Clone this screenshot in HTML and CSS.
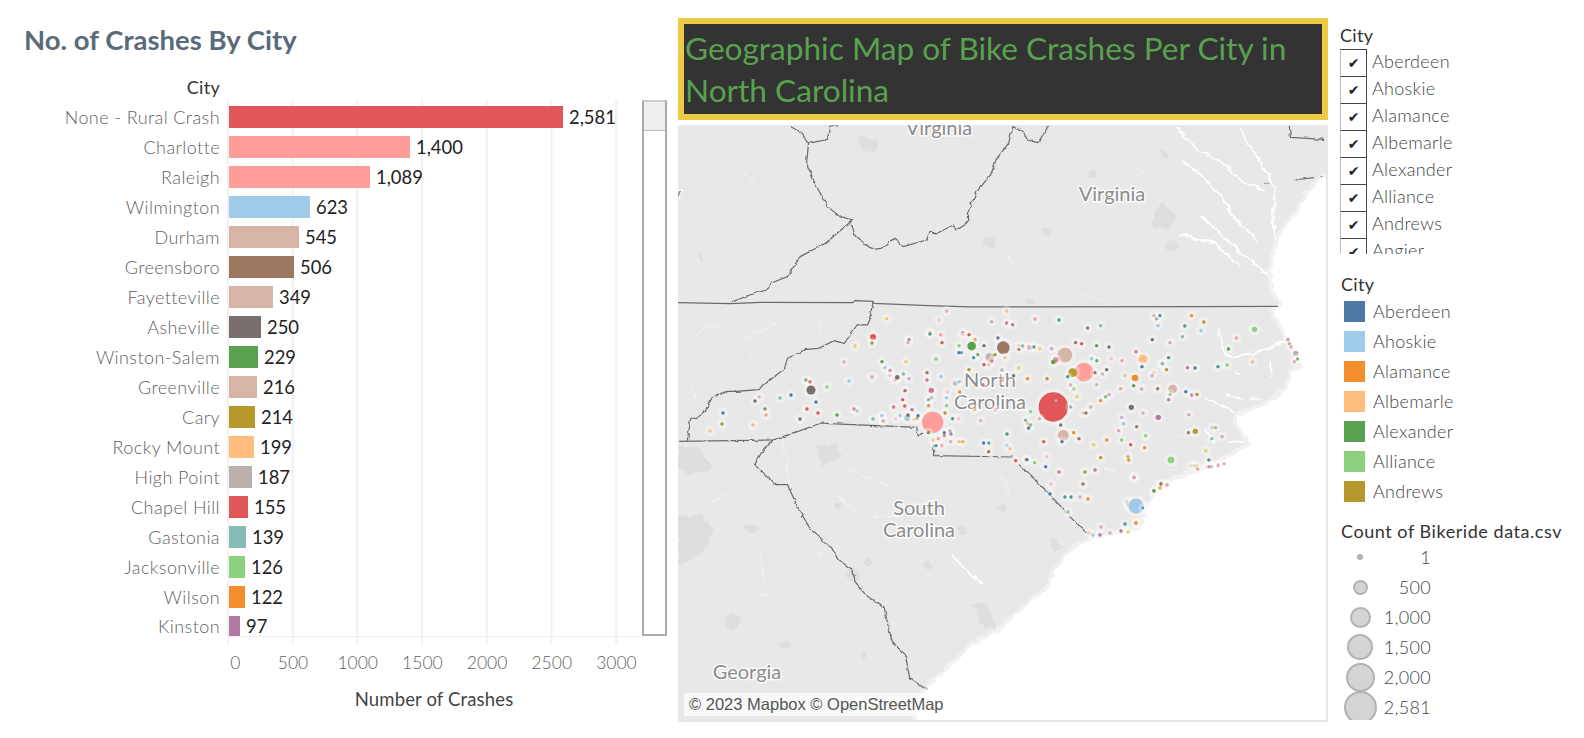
FILE: index.html
```html
<!DOCTYPE html>
<html lang="en">
<head>
<meta charset="utf-8">
<title>Bike Crashes in North Carolina</title>
<link rel="stylesheet" href="styles.css">
</head>
<body>
<main class="dash">
  <section class="left">
    <h1 class="chart-title">No. of Crashes By City</h1>
    <div class="city-head">City</div>
    <div class="chart">
      <div class="grid"></div>
      <div class="rows">
        <div class="row"><span class="lbl">None - Rural Crash</span><span class="bar red" style="width:334px"></span><span class="val">2,581</span></div>
        <div class="row"><span class="lbl">Charlotte</span><span class="bar pk" style="width:181px"></span><span class="val">1,400</span></div>
        <div class="row"><span class="lbl">Raleigh</span><span class="bar pk" style="width:141px"></span><span class="val">1,089</span></div>
        <div class="row"><span class="lbl">Wilmington</span><span class="bar lb" style="width:81px"></span><span class="val">623</span></div>
        <div class="row"><span class="lbl">Durham</span><span class="bar tn" style="width:70px"></span><span class="val">545</span></div>
        <div class="row"><span class="lbl">Greensboro</span><span class="bar br" style="width:65px"></span><span class="val">506</span></div>
        <div class="row"><span class="lbl">Fayetteville</span><span class="bar tn" style="width:44px"></span><span class="val">349</span></div>
        <div class="row"><span class="lbl">Asheville</span><span class="bar gr" style="width:32px"></span><span class="val">250</span></div>
        <div class="row"><span class="lbl">Winston-Salem</span><span class="bar g" style="width:29px"></span><span class="val">229</span></div>
        <div class="row"><span class="lbl">Greenville</span><span class="bar tn" style="width:28px"></span><span class="val">216</span></div>
        <div class="row"><span class="lbl">Cary</span><span class="bar y" style="width:26px"></span><span class="val">214</span></div>
        <div class="row"><span class="lbl">Rocky Mount</span><span class="bar lo" style="width:25px"></span><span class="val">199</span></div>
        <div class="row"><span class="lbl">High Point</span><span class="bar ls" style="width:23px"></span><span class="val">187</span></div>
        <div class="row"><span class="lbl">Chapel Hill</span><span class="bar red" style="width:19px"></span><span class="val">155</span></div>
        <div class="row"><span class="lbl">Gastonia</span><span class="bar lt" style="width:17px"></span><span class="val">139</span></div>
        <div class="row"><span class="lbl">Jacksonville</span><span class="bar lg" style="width:16px"></span><span class="val">126</span></div>
        <div class="row"><span class="lbl">Wilson</span><span class="bar o" style="width:16px"></span><span class="val">122</span></div>
        <div class="row last"><span class="lbl">Kinston</span><span class="bar pu" style="width:11px"></span><span class="val">97</span></div>
      </div>
      <div class="scroll"><div class="thumb"></div></div>
    </div>
    <div class="ticks"></div>
    <div class="axis">
      <span class="zero">0</span><span>500</span><span>1000</span><span>1500</span><span>2000</span><span>2500</span><span>3000</span>
    </div>
    <div class="axis-title">Number of Crashes</div>
  </section>

  <section class="center">
    <h2 class="map-title">Geographic Map of Bike Crashes Per City in North Carolina</h2>
    <div class="map">
      <svg class="map-svg" viewBox="678 125 648 595" width="648" height="595" aria-label="Map of bike crashes">
        <defs>
          <filter id="rough" x="-5%" y="-5%" width="110%" height="110%">
            <feTurbulence type="fractalNoise" baseFrequency="0.035" numOctaves="3" seed="4"/>
            <feDisplacementMap in="SourceGraphic" scale="22" xChannelSelector="R" yChannelSelector="G"/>
            <feGaussianBlur stdDeviation="1"/>
          </filter>
          <filter id="wiggle" x="-5%" y="-5%" width="110%" height="110%">
            <feTurbulence type="fractalNoise" baseFrequency="0.07" numOctaves="2" seed="9"/>
            <feDisplacementMap in="SourceGraphic" scale="9" xChannelSelector="R" yChannelSelector="G"/>
          </filter>
          <filter id="coast" x="-5%" y="-5%" width="110%" height="110%">
            <feTurbulence type="fractalNoise" baseFrequency="0.05" numOctaves="3" seed="2"/>
            <feDisplacementMap in="SourceGraphic" scale="16" xChannelSelector="R" yChannelSelector="G"/>
          </filter>
        </defs>
        <rect x="678" y="125" width="648" height="595" class="land"/>
        <g transform="translate(676,0) scale(.4209,.3333)">
          <g class="blob" filter="url(#rough)">
            <path d="M1130,640 L1160,610 L1190,650 L1170,690 L1135,680Z"/>
            <path d="M730,710 L760,715 L755,745 L730,740Z"/>
            <path d="M430,410 L480,430 L470,460 L440,450Z"/>
            <ellipse cx="880" cy="695" rx="10" ry="14"/>
            <ellipse cx="1158" cy="460" rx="9" ry="16"/>
            <ellipse cx="992" cy="520" rx="8" ry="14"/>
            <ellipse cx="1180" cy="735" rx="14" ry="16"/>
            <ellipse cx="60" cy="770" rx="6" ry="14"/>
            <ellipse cx="843" cy="905" rx="10" ry="10"/>
          </g>
          <g class="river" filter="url(#rough)">
            <path class="fat" d="M1190,385 L1240,450 L1290,480 L1340,540 L1400,570"/>
            <path class="fat" d="M1200,480 L1270,550 L1320,640 L1380,720"/>
            <path class="fat" d="M1250,650 L1310,720 L1370,790 L1420,835"/>
            <path class="fat" d="M1195,705 L1280,730 L1340,800"/>
            <path class="fat" d="M1340,385 L1380,470 L1420,560 L1425,760"/>
            <path d="M775,745 L800,790"/>
            <path d="M1090,495 L1115,530"/>
            <path d="M950,880 L1010,900 L1050,925"/>
            <path d="M155,510 L180,545"/>
            <path d="M50,1000 L110,965"/>
            <path d="M165,1020 L240,965"/>
            <path d="M345,960 L340,985"/>
            <path d="M170,1070 L210,1035"/>
          </g>
        </g>
        <g transform="translate(676,368) scale(.4209,.3333)">
          <g class="blob" filter="url(#rough)">
            <path d="M5,440 L60,440 L90,480 L60,560 L5,590Z"/>
            <path d="M5,235 L60,250 L90,300 L30,320 L5,300Z"/>
            <path d="M330,235 L380,225 L395,270 L350,290Z"/>
            <path d="M705,705 L740,710 L760,780 L730,780Z"/>
            <path d="M890,510 L920,530 L900,560Z"/>
            <ellipse cx="135" cy="760" rx="18" ry="22"/>
            <ellipse cx="180" cy="480" rx="16" ry="12"/>
            <ellipse cx="385" cy="415" rx="9" ry="12"/>
            <ellipse cx="778" cy="420" rx="10" ry="12"/>
            <ellipse cx="600" cy="592" rx="8" ry="12"/>
            <ellipse cx="457" cy="580" rx="8" ry="14"/>
            <ellipse cx="680" cy="488" rx="10" ry="14"/>
            <ellipse cx="258" cy="832" rx="9" ry="9"/>
            <ellipse cx="445" cy="860" rx="6" ry="12"/>
            <ellipse cx="420" cy="620" rx="18" ry="20"/>
          </g>
          <g class="river" filter="url(#rough)">
            <path d="M70,420 L125,370"/>
            <path d="M255,220 L270,340"/>
            <path d="M470,445 L540,450"/>
            <path d="M385,385 L425,425"/>
            <path d="M395,290 L510,360"/>
            <path class="fat" d="M655,560 L690,610 L735,650"/>
            <path d="M320,570 L370,540"/>
            <path d="M200,560 L215,640"/>
            <path d="M180,670 L220,690"/>
            <path d="M40,50 L45,90"/>
            <path d="M770,320 L790,380"/>
            <path d="M1020,300 L1060,330"/>
            <path d="M1180,190 L1210,215"/>
            <path d="M1170,300 L1190,310"/>
          </g>
        </g>
        <g transform="translate(1130,300) scale(.3384,.3333)">
          <g class="river wide" filter="url(#rough)">
            <path d="M262,85 L268,150 L295,175 L370,158 L465,125"/>
            <path d="M415,180 L415,235"/>
            <path d="M225,290 L310,340"/>
            <path d="M285,285 L330,300"/>
            <path d="M355,293 L395,293"/>
            <path d="M310,222 L330,222"/>
            <path d="M220,385 L250,425"/>
            <path d="M290,425 L340,425"/>
          </g>
        </g>
        <g transform="translate(676,368) scale(.4209,.3333)">
          <g filter="url(#coast)">
            <path class="ocean" d="M1580,-600 L1535,-575 L1500,-530 L1470,-464 L1430,-404 L1415,-334 L1410,-260 L1420,-220 L1435,-190 L1412,-174 L1450,-90 L1485,-4 L1457,11 L1452,56 L1400,106 L1328,141 L1328,166 L1360,226 L1312,266 L1240,306 L1175,336 L1127,386 L1111,436 L1100,480 L985,510 L940,540 L900,600 L880,660 L820,720 L770,780 L700,830 L660,880 L590,960 L560,1090 L1580,1090Z"/>
          </g>
          <g filter="url(#wiggle)">
            <path class="border" d="M5,220 L230,216 L290,190 L345,165 L365,167 L572,178 L575,205 L585,195"/>
            <path class="border" d="M612,230 L612,263 L800,267"/>
            <path class="border" d="M815,290 L885,375 M892,385 L925,430 M935,445 L975,495"/>
            <path class="border" d="M262,0 L250,10 L220,40 L195,65 L145,70 L120,70 L85,90 L70,130 L48,152 L35,150 L27,218"/>
            <path class="border" d="M230,216 L205,250 L187,290 L210,320 L240,350 L265,350 L290,420 L320,485 L370,540 L385,575 L420,605 L425,640 L450,680 L495,720 L505,780 L515,825 L545,860 L555,930 L595,965"/>
          </g>
        </g>
        <g transform="translate(676,0) scale(.4209,.3333)">
          <g filter="url(#wiggle)">
            <path class="border" d="M270,378 L300,400 L315,430 L310,490 L330,550 L360,620 L390,650 L420,660 L355,730 L295,770 L265,830 L225,850 L215,870 L175,885 L135,905"/>
            <path class="border" d="M315,430 L360,418 L365,378 L385,378"/>
            <path class="border" d="M415,665 L425,705 L465,748 L490,745 L518,715 L540,740 L595,720 L605,690 L615,702 L660,675 L665,690 L695,665 L695,630 L715,575 L750,520 L760,480 L790,430 L800,380 L825,395 L835,420 L860,428 L885,378"/>
            <path class="border" d="M1457,378 L1460,412 L1540,418"/>
            <path class="border" d="M1398,549 L1410,549 M1470,540 L1515,533 M1530,530 L1535,530"/>
            <path class="border" d="M468,904 L460,960 L455,975 L430,975 L400,1030 L375,1022 L340,1045 L310,1048 L265,1075 L258,1104"/>
          </g>
          <path class="border" d="M5,908 L130,911 L200,907 L420,908 L425,902 L468,904 L470,910 L600,917 L700,921 L1250,920 L1430,919"/>
        </g>
        <text class="place" x="939" y="135">Virginia</text>
        <text class="place" x="1112" y="201">Virginia</text>
        <text class="place" x="676" y="201" text-anchor="start">y</text>
        <text class="place" x="990" y="387">North</text>
        <text class="place" x="990" y="409">Carolina</text>
        <text class="place" x="919" y="515">South</text>
        <text class="place" x="919" y="537">Carolina</text>
        <text class="place" x="747" y="679">Georgia</text>

        <g class="dots" transform="translate(880,300) scale(.3333)">
          <circle class="tn" cx="200" cy="33" r="5"/><circle class="lo" cx="380" cy="33" r="5"/><circle class="ye" cx="20" cy="56" r="5"/><circle class="lp" cx="177" cy="60" r="5"/><circle class="lu" cx="335" cy="65" r="5"/><circle class="m" cx="380" cy="69" r="5"/><circle class="pu" cx="398" cy="74" r="5"/><circle class="pk" cx="465" cy="57" r="5"/><circle class="t" cx="537" cy="60" r="5"/><circle class="br" cx="623" cy="84" r="5"/><circle class="lt" cx="662" cy="77" r="5"/>
          <circle class="ye" cx="150" cy="97" r="5"/><circle class="t" cx="150" cy="102" r="5"/><circle class="pk" cx="182" cy="104" r="5"/><circle class="m" cx="248" cy="97" r="5"/><circle class="lp" cx="248" cy="103" r="5"/><circle class="red" cx="267" cy="104" r="5"/><circle class="o" cx="285" cy="119" r="5"/><circle class="red" cx="186" cy="128" r="5"/><circle class="gr" cx="87" cy="119" r="5"/><circle class="tn" cx="84" cy="128" r="5"/><circle class="lg" cx="237" cy="137" r="5"/><circle class="g" cx="275" cy="138" r="13"/><circle class="gr" cx="312" cy="137" r="5"/><circle class="b" cx="354" cy="114" r="5"/><circle class="br" cx="370" cy="143" r="19"/>
          <circle class="pk" cx="417" cy="137" r="5"/><circle class="br" cx="417" cy="148" r="5"/><circle class="lt" cx="428" cy="138" r="5"/><circle class="o" cx="447" cy="140" r="5"/><circle class="lu" cx="449" cy="143" r="7"/><circle class="t" cx="462" cy="141" r="5"/><circle class="ye" cx="479" cy="146" r="5"/><circle class="lu" cx="515" cy="146" r="5"/><circle class="tn" cx="555" cy="165" r="22"/><circle class="br" cx="587" cy="128" r="5"/><circle class="red" cx="605" cy="131" r="5"/><circle class="g" cx="650" cy="137" r="5"/><circle class="gr" cx="687" cy="141" r="5"/><circle class="gr" cx="817" cy="119" r="5"/><circle class="lu" cx="870" cy="128" r="5"/><circle class="gr" cx="830" cy="56" r="5"/><circle class="tn" cx="822" cy="47" r="5"/><circle class="t" cx="840" cy="47" r="5"/><circle class="lb" cx="834" cy="77" r="5"/>
          <circle class="m" cx="768" cy="155" r="5"/><circle class="lo" cx="789" cy="177" r="13"/><circle class="b" cx="786" cy="200" r="5"/><circle class="pk" cx="726" cy="182" r="5"/><circle class="lp" cx="694" cy="176" r="5"/><circle class="g" cx="650" cy="182" r="5"/><circle class="lb" cx="635" cy="176" r="5"/><circle class="t" cx="866" cy="173" r="5"/><circle class="ye" cx="845" cy="191" r="5"/><circle class="lt" cx="848" cy="191" r="5"/><circle class="y" cx="860" cy="209" r="5"/><circle class="lo" cx="822" cy="218" r="5"/><circle class="lu" cx="816" cy="227" r="5"/><circle class="lo" cx="735" cy="227" r="5"/><circle class="o" cx="765" cy="234" r="10"/><circle class="g" cx="761" cy="257" r="5"/><circle class="lu" cx="785" cy="267" r="5"/><circle class="pk" cx="722" cy="266" r="5"/><circle class="br" cx="833" cy="266" r="5"/><circle class="tn" cx="878" cy="267" r="13"/><circle class="lg" cx="870" cy="284" r="5"/><circle class="m" cx="866" cy="299" r="5"/>
          <circle class="b" cx="245" cy="158" r="5"/><circle class="b" cx="237" cy="158" r="5"/><circle class="g" cx="293" cy="164" r="5"/><circle class="t" cx="281" cy="173" r="5"/><circle class="ls" cx="330" cy="172" r="13"/><circle class="y" cx="345" cy="164" r="5"/><circle class="ye" cx="375" cy="173" r="5"/><circle class="red" cx="335" cy="184" r="5"/><circle class="tn" cx="326" cy="194" r="5"/><circle class="red" cx="312" cy="194" r="5"/><circle class="lg" cx="168" cy="177" r="5"/><circle class="ye" cx="78" cy="185" r="5"/><circle class="g" cx="6" cy="185" r="5"/><circle class="lb" cx="15" cy="203" r="5"/><circle class="m" cx="30" cy="212" r="5"/><circle class="lp" cx="30" cy="226" r="5"/><circle class="pk" cx="45" cy="240" r="5"/><circle class="gr" cx="52" cy="232" r="7"/><circle class="lt" cx="70" cy="222" r="5"/><circle class="lu" cx="87" cy="236" r="5"/><circle class="br" cx="141" cy="218" r="5"/><circle class="m" cx="141" cy="240" r="5"/><circle class="lb" cx="183" cy="230" r="5"/><circle class="ls" cx="226" cy="250" r="7"/><circle class="lb" cx="238" cy="245" r="5"/><circle class="y" cx="267" cy="209" r="5"/><circle class="ls" cx="366" cy="210" r="5"/><circle class="ye" cx="416" cy="204" r="5"/><circle class="gr" cx="401" cy="227" r="5"/><circle class="pk" cx="366" cy="240" r="5"/><circle class="m" cx="309" cy="254" r="5"/><circle class="o" cx="443" cy="236" r="5"/><circle class="y" cx="501" cy="236" r="5"/><circle class="red" cx="527" cy="180" r="8"/><circle class="g" cx="520" cy="186" r="7"/><circle class="pk" cx="612" cy="216" r="28"/><circle class="y" cx="578" cy="218" r="13"/><circle class="ye plain" cx="617" cy="240" r="4"/><circle class="t" cx="563" cy="230" r="5"/><circle class="br" cx="645" cy="218" r="5"/><circle class="tn" cx="668" cy="222" r="5"/><circle class="gr" cx="680" cy="209" r="5"/>
          <circle class="m" cx="154" cy="271" r="8"/><circle class="br" cx="75" cy="272" r="5"/><circle class="o" cx="239" cy="276" r="5"/><circle class="lp" cx="203" cy="276" r="5"/><circle class="lb" cx="200" cy="293" r="5"/><circle class="lg" cx="200" cy="317" r="5"/><circle class="t" cx="146" cy="299" r="5"/><circle class="tn" cx="155" cy="293" r="5"/><circle class="red" cx="68" cy="299" r="5"/><circle class="m" cx="41" cy="321" r="5"/><circle class="red" cx="74" cy="318" r="5"/><circle class="pu" cx="96" cy="329" r="5"/><circle class="o" cx="146" cy="317" r="5"/><circle class="y" cx="195" cy="339" r="5"/><circle class="lb" cx="6" cy="347" r="5"/><circle class="lp" cx="48" cy="356" r="5"/><circle class="lb" cx="60" cy="347" r="5"/><circle class="lt" cx="82" cy="353" r="9"/><circle class="gr" cx="84" cy="345" r="5"/><circle class="lo" cx="102" cy="358" r="5"/><circle class="y" cx="111" cy="355" r="5"/><circle class="b" cx="114" cy="347" r="5"/><circle class="pk" cx="158" cy="367" r="32"/><circle class="t" cx="218" cy="356" r="5"/><circle class="lp" cx="236" cy="356" r="5"/><circle class="tn" cx="11" cy="362" r="5"/><circle class="tn" cx="302" cy="362" r="5"/><circle class="lp" cx="347" cy="329" r="5"/><circle class="lo" cx="284" cy="329" r="5"/>
          <circle class="red" cx="520" cy="321" r="44"/><circle class="ls plain" cx="528" cy="302" r="4"/><circle class="lg" cx="452" cy="335" r="5"/><circle class="t" cx="437" cy="361" r="5"/><circle class="o" cx="443" cy="371" r="5"/><circle class="g" cx="452" cy="375" r="5"/><circle class="b" cx="446" cy="384" r="5"/><circle class="tn" cx="479" cy="356" r="5"/><circle class="gr" cx="542" cy="375" r="5"/><circle class="tn" cx="550" cy="406" r="16"/><circle class="b" cx="546" cy="425" r="5"/><circle class="o" cx="581" cy="398" r="5"/><circle class="br" cx="597" cy="416" r="5"/><circle class="red" cx="491" cy="425" r="5"/><circle class="lt" cx="572" cy="321" r="5"/><circle class="ye" cx="591" cy="290" r="5"/><circle class="lg" cx="581" cy="266" r="5"/><circle class="tn" cx="572" cy="255" r="5"/><circle class="tn" cx="650" cy="254" r="5"/><circle class="o" cx="662" cy="302" r="5"/><circle class="g" cx="677" cy="290" r="5"/><circle class="lu" cx="687" cy="284" r="5"/><circle class="tn" cx="632" cy="321" r="5"/><circle class="tn" cx="609" cy="339" r="5"/><circle class="br" cx="618" cy="339" r="5"/><circle class="gr" cx="754" cy="322" r="8"/><circle class="tn" cx="789" cy="339" r="5"/><circle class="pu" cx="835" cy="352" r="8"/><circle class="lu" cx="725" cy="352" r="5"/><circle class="lb" cx="731" cy="371" r="5"/><circle class="br" cx="770" cy="380" r="5"/><circle class="lu" cx="716" cy="392" r="5"/><circle class="lg" cx="797" cy="407" r="5"/><circle class="lg" cx="725" cy="420" r="5"/><circle class="red" cx="752" cy="434" r="5"/><circle class="o" cx="794" cy="443" r="5"/><circle class="o" cx="680" cy="420" r="5"/><circle class="ye" cx="641" cy="434" r="5"/><circle class="y" cx="662" cy="473" r="5"/><circle class="y" cx="744" cy="470" r="5"/><circle class="o" cx="746" cy="480" r="5"/><circle class="lg" cx="873" cy="480" r="10"/><circle class="lp" cx="500" cy="470" r="5"/><circle class="b" cx="497" cy="500" r="5"/><circle class="lg" cx="464" cy="488" r="5"/><circle class="o" cx="438" cy="479" r="5"/><circle class="b" cx="441" cy="479" r="5"/><circle class="red" cx="407" cy="482" r="5"/><circle class="t" cx="381" cy="402" r="5"/><circle class="lb" cx="381" cy="437" r="5"/><circle class="lo" cx="390" cy="446" r="5"/><circle class="br" cx="326" cy="455" r="5"/><circle class="t" cx="326" cy="429" r="5"/><circle class="b" cx="311" cy="429" r="5"/><circle class="o" cx="248" cy="425" r="5"/><circle class="lo" cx="237" cy="425" r="5"/><circle class="tn" cx="212" cy="425" r="5"/><circle class="pk" cx="185" cy="437" r="5"/><circle class="t" cx="168" cy="437" r="5"/><circle class="lo" cx="160" cy="420" r="5"/><circle class="pk" cx="175" cy="416" r="5"/><circle class="red" cx="193" cy="407" r="5"/><circle class="b" cx="193" cy="398" r="5"/><circle class="pu" cx="210" cy="393" r="5"/><circle class="pu" cx="213" cy="402" r="5"/><circle class="g" cx="145" cy="398" r="5"/>
        </g>
        <g class="dots" transform="translate(1130,300) scale(.3384,.3333)">
          <circle class="o" cx="182" cy="47" r="5"/><circle class="y" cx="218" cy="66" r="5"/><circle class="t" cx="162" cy="78" r="5"/><circle class="lb" cx="210" cy="92" r="5"/><circle class="lt" cx="155" cy="110" r="5"/><circle class="lg" cx="368" cy="88" r="8"/><circle class="pk" cx="314" cy="114" r="5"/><circle class="g" cx="291" cy="147" r="5"/><circle class="pu" cx="467" cy="119" r="5"/><circle class="y" cx="471" cy="131" r="5"/><circle class="lu" cx="476" cy="141" r="5"/><circle class="ls" cx="490" cy="160" r="8"/><circle class="g" cx="495" cy="177" r="5"/><circle class="tn" cx="486" cy="185" r="5"/><circle class="lo" cx="362" cy="186" r="5"/><circle class="lg" cx="287" cy="195" r="5"/><circle class="t" cx="260" cy="200" r="5"/><circle class="b" cx="192" cy="204" r="5"/><circle class="m" cx="170" cy="203" r="5"/><circle class="b" cx="165" cy="275" r="5"/><circle class="pu" cx="183" cy="285" r="5"/><circle class="y" cx="198" cy="283" r="5"/><circle class="lu" cx="174" cy="344" r="5"/><circle class="br" cx="173" cy="398" r="5"/><circle class="y" cx="193" cy="394" r="8"/><circle class="lu" cx="243" cy="383" r="5"/><circle class="lg" cx="253" cy="383" r="5"/><circle class="lt" cx="242" cy="416" r="5"/><circle class="lu" cx="272" cy="410" r="5"/><circle class="ye" cx="224" cy="452" r="5"/><circle class="t" cx="233" cy="480" r="5"/><circle class="lo" cx="180" cy="497" r="5"/><circle class="lb" cx="190" cy="498" r="5"/><circle class="ye" cx="197" cy="497" r="5"/><circle class="pk" cx="200" cy="507" r="5"/><circle class="lo" cx="228" cy="501" r="5"/><circle class="red" cx="234" cy="500" r="5"/><circle class="lb" cx="241" cy="500" r="5"/><circle class="lp" cx="260" cy="493" r="5"/><circle class="tn" cx="261" cy="497" r="5"/><circle class="lu" cx="278" cy="491" r="5"/><circle class="pk" cx="110" cy="554" r="5"/><circle class="br" cx="92" cy="551" r="5"/><circle class="o" cx="89" cy="563" r="5"/><circle class="g" cx="71" cy="572" r="5"/><circle class="o" cx="17" cy="669" r="5"/><circle class="pu" cx="12" cy="533" r="5"/>
        </g>
        <g class="dots page">
          <circle class="red" cx="873" cy="337" r="3"/><circle class="y" cx="872" cy="343" r="1.7"/><circle class="ye" cx="855" cy="346" r="1.7"/><circle class="tn" cx="844" cy="362" r="1.7"/><circle class="g" cx="806" cy="380" r="1.7"/><circle class="red" cx="810" cy="382" r="1.7"/><circle class="gr" cx="811" cy="390" r="4.5"/><circle class="lg" cx="827" cy="387" r="1.7"/><circle class="lb" cx="849" cy="381" r="1.7"/><circle class="lu" cx="872" cy="377" r="1.7"/><circle class="b" cx="816" cy="402" r="1.7"/><circle class="b" cx="791" cy="395" r="1.7"/><circle class="lt" cx="780" cy="398" r="1.7"/><circle class="tn" cx="759" cy="397" r="1.7"/><circle class="gr" cx="755" cy="401" r="1.7"/><circle class="b" cx="723" cy="413" r="1.7"/><circle class="y" cx="722" cy="424" r="1.7"/><circle class="lo" cx="710" cy="431" r="1.7"/><circle class="lo" cx="753" cy="425" r="1.7"/><circle class="g" cx="765" cy="409" r="1.7"/><circle class="pk" cx="766" cy="415" r="1.7"/><circle class="gr" cx="800" cy="419" r="1.7"/><circle class="red" cx="807" cy="409" r="1.7"/><circle class="red" cx="818" cy="413" r="1.7"/><circle class="g" cx="837" cy="415" r="1.7"/><circle class="red" cx="854" cy="409" r="1.7"/><circle class="lb" cx="857" cy="411" r="1.7"/><circle class="lt" cx="873" cy="419" r="1.7"/><circle class="lb" cx="882" cy="416" r="1.7"/><circle class="tn" cx="883" cy="421" r="1.7"/>
          <circle class="m" cx="1059" cy="472" r="1.7"/><circle class="lp" cx="1051" cy="484" r="1.7"/><circle class="br" cx="1083" cy="484" r="1.7"/><circle class="y" cx="1085" cy="472" r="1.7"/><circle class="pu" cx="1095" cy="470" r="1.7"/><circle class="b" cx="1050" cy="494" r="1.7"/><circle class="t" cx="1065" cy="497" r="1.7"/><circle class="t" cx="1071" cy="497" r="1.7"/><circle class="lu" cx="1080" cy="497" r="1.7"/><circle class="o" cx="1088" cy="499" r="1.7"/><circle class="lg" cx="1068" cy="512" r="1.7"/><circle class="lg" cx="1127" cy="502" r="1.7"/><circle class="lo" cx="1128" cy="505" r="1.7"/><circle class="lb" cx="1136" cy="506" r="7.5"/><circle class="t" cx="1143" cy="508" r="1.2"/><circle class="lu" cx="1134" cy="477" r="1.7"/><circle class="g" cx="1154" cy="491" r="1.7"/><circle class="o" cx="1160" cy="488" r="1.7"/><circle class="br" cx="1161" cy="484" r="1.7"/><circle class="pk" cx="1167" cy="485" r="1.7"/><circle class="o" cx="1136" cy="523" r="1.7"/><circle class="t" cx="1125" cy="524" r="1.7"/><circle class="pu" cx="1121" cy="531" r="1.7"/><circle class="ye" cx="1128" cy="532" r="1.7"/><circle class="lu" cx="1110" cy="533" r="1.7"/><circle class="pu" cx="1100" cy="535" r="1.7"/><circle class="tn" cx="1101" cy="527" r="1.7"/><circle class="lo" cx="1089" cy="533" r="1.7"/><circle class="lb" cx="1093" cy="535" r="1.7"/>
        </g>
      </svg>
      <div class="attribution">© 2023 Mapbox © OpenStreetMap</div>
    </div>
  </section>

  <aside class="right">
    <div class="side-title">City</div>
    <ul class="filter">
      <li><span class="check">✔</span>Aberdeen</li>
      <li><span class="check">✔</span>Ahoskie</li>
      <li><span class="check">✔</span>Alamance</li>
      <li><span class="check">✔</span>Albemarle</li>
      <li><span class="check">✔</span>Alexander</li>
      <li><span class="check">✔</span>Alliance</li>
      <li><span class="check">✔</span>Andrews</li>
      <li><span class="check">✔</span>Angier</li>
    </ul>
    <div class="side-title legend-title">City</div>
    <ul class="legend">
      <li><span class="swatch b"></span>Aberdeen</li>
      <li><span class="swatch lb"></span>Ahoskie</li>
      <li><span class="swatch o"></span>Alamance</li>
      <li><span class="swatch lo"></span>Albemarle</li>
      <li><span class="swatch g"></span>Alexander</li>
      <li><span class="swatch lg"></span>Alliance</li>
      <li><span class="swatch y"></span>Andrews</li>
    </ul>
    <div class="side-title count-title">Count of Bikeride data.csv</div>
    <ul class="sizes">
      <li><span class="cell"><span class="size s1"></span></span><span class="num">1</span></li>
      <li><span class="cell"><span class="size s2"></span></span><span class="num">500</span></li>
      <li><span class="cell"><span class="size s3"></span></span><span class="num">1,000</span></li>
      <li><span class="cell"><span class="size s4"></span></span><span class="num">1,500</span></li>
      <li><span class="cell"><span class="size s5"></span></span><span class="num">2,000</span></li>
      <li><span class="cell"><span class="size s6"></span></span><span class="num">2,581</span></li>
    </ul>
  </aside>
</main>
</body>
</html>
```
FILE: styles.css
```css
* { box-sizing: border-box; }
html, body { margin: 0; padding: 0; background: #fff; }
body { font-family: Lato, "Open Sans", sans-serif; }
ul { list-style: none; margin: 0; padding: 0; }

.red { --c: #e15759; } .pk { --c: #ff9d9a; } .b { --c: #4e79a7; } .lb { --c: #a0cbe8; }
.o { --c: #f28e2b; } .lo { --c: #ffbe7d; } .g { --c: #59a14f; } .lg { --c: #8cd17d; }
.y { --c: #b6992d; } .ye { --c: #f1ce63; } .t { --c: #499894; } .lt { --c: #86bcb6; }
.br { --c: #9d7660; } .tn { --c: #d7b5a6; } .gr { --c: #79706e; } .ls { --c: #bab0ac; }
.m { --c: #d37295; } .lp { --c: #fabfd2; } .pu { --c: #b07aa1; } .lu { --c: #d4a6c8; }

.dash { display: flex; width: 1584px; height: 738px; overflow: hidden; }

/* left chart */
.left { width: 678px; flex: none; }
.chart-title { margin: 20px 0 0; padding-left: 24px; height: 40px; line-height: 40px; font-size: 27.5px; font-weight: 700; color: #5b6a79; white-space: nowrap; }
.city-head { margin-top: 17px; height: 21px; line-height: 21px; width: 220px; text-align: right; font-size: 18px; letter-spacing: .3px; color: #333; }
.chart { position: relative; margin-top: 2px; height: 536px; }
.grid { position: absolute; left: 227px; top: 0; bottom: 0; width: 392px;
  background: linear-gradient(90deg, #f1f1f1 2px, transparent 2px) 0 0 / 64.7px 100% repeat-x; }
.rows { position: relative; padding-top: 2px; }
.row { display: flex; align-items: center; height: 30px; }
.row.last { height: 20px; margin-top: 4px; }
.row.last .bar { height: 20px; }
.lbl { width: 220px; margin-right: 9px; flex: none; text-align: right; font-size: 18px; line-height: 18px; letter-spacing: .42px; font-weight: 300; color: #5f5f5f; white-space: nowrap; }
.bar { display: block; height: 22px; flex: none; background: var(--c); }
.val { margin-left: 6px; font-size: 18.4px; line-height: 18px; color: #222; }
.scroll { position: absolute; left: 642px; top: 0; width: 25px; height: 536px; border: 2px solid #aaa; border-top-color: #ccc; background: #fff; }
.thumb { height: 29px; background: #efefef; border-bottom: 1px solid #bbb; }
.ticks { margin-left: 227px; width: 415px; height: 8px; border-top: 1px solid #efefef; background: linear-gradient(90deg, #f1f1f1 2px, transparent 2px) 0 0 / 64.7px 100% repeat-x; }
.axis { display: flex; margin: 0 0 0 196px; height: 36px; align-items: center; font-size: 17.5px; font-weight: 300; color: #5f5f5f; }
.axis span { width: 64.7px; flex: none; text-align: center; }
.axis .zero { padding-left: 14px; }
.axis-title { width: 868px; text-align: center; height: 38px; line-height: 38px; font-size: 18.5px; font-weight: 400; letter-spacing: .15px; color: #444; }

/* map */
.center { width: 650px; flex: none; padding-top: 18px; display: flex; flex-direction: column; gap: 5px; }
.map-title { margin: 0; width: 650px; height: 102px; border: 6px solid #edc948; background: #333; padding: 3px 0 0 1px; font-size: 31.6px; line-height: 42px; font-weight: 400; color: #59a14f; }
.map { position: relative; width: 650px; height: 597px; border-right: 2px solid #e6e6e6; border-bottom: 2px solid #e6e6e6; overflow: hidden; }
.map-svg { display: block; }
.land { fill: #e8e8e8; }
.ocean { fill: #fff; stroke: #f1f1f1; stroke-width: 4; vector-effect: non-scaling-stroke; }
.border { fill: none; stroke: #6a6a6a; stroke-width: 1.2; vector-effect: non-scaling-stroke; stroke-linejoin: round; }
.blob { fill: #dedede; }
.river { fill: none; stroke: #f7f7f7; stroke-width: 2; vector-effect: non-scaling-stroke; }
.river .fat { stroke: #fff; stroke-width: 5; }
.river.wide { stroke: #fff; stroke-width: 5; }
.place { font-family: Lato, sans-serif; font-size: 20px; fill: #8c8c8c; stroke: #fff; stroke-width: 3px; stroke-opacity: .85; paint-order: stroke fill; text-anchor: middle; }
.dots circle { fill: var(--c); stroke: #fff; stroke-opacity: .3; stroke-width: 21; paint-order: stroke fill; }
.dots.page circle { stroke-width: 7; }
.dots circle.plain { stroke: none; }
.attribution { position: absolute; left: 6px; top: 568px; width: 266px; height: 23px; line-height: 23px; padding-left: 5px; background: rgba(255,255,255,.75); font-family: "Liberation Sans", sans-serif; font-size: 16.5px; color: #555; white-space: nowrap; }

/* right */
.right { flex: 1; height: 720px; overflow: hidden; padding: 24px 0 0 12px; color: #444; font-size: 18px; letter-spacing: .3px; font-weight: 300; }
.side-title { height: 22px; line-height: 22px; font-size: 18px; font-weight: 400; color: #333; white-space: nowrap; }
.filter { margin-top: 3px; height: 205px; overflow: hidden; }
.filter li { display: flex; align-items: flex-start; height: 27px; line-height: 25px; white-space: nowrap; }
.check { width: 27px; height: 27px; flex: none; margin-right: 5px; display: flex; align-items: center; justify-content: center; border-top: 1px solid #444; border-right: 1px solid #444; border-left: 1px solid #bbb; font-family: "DejaVu Sans", sans-serif; font-size: 14px; font-weight: 400; letter-spacing: 0; color: #222; }
.legend-title { margin: 19px 0 0 1px; }
.legend { margin: 1px 0 0 4px; }
.legend li { display: flex; align-items: center; height: 30px; }
.swatch { width: 21px; height: 21px; margin-right: 8px; background: var(--c); flex: none; }
.count-title { margin: 14px 0 0 1px; letter-spacing: .55px; }
.sizes { margin-top: 0; }
.sizes li { display: flex; align-items: center; height: 30px; }
.cell { width: 40px; display: flex; justify-content: center; flex: none; }
.size { display: block; flex: none; border-radius: 50%; background: #d4d4d4; border: 2.5px solid #b2b2b2; }
.s1 { width: 6px; height: 6px; border: 0; background: #b2b2b2; }
.s2 { width: 15px; height: 15px; }
.s3 { width: 21px; height: 21px; }
.s4 { width: 26px; height: 26px; }
.s5 { width: 29px; height: 29px; }
.s6 { width: 33px; height: 33px; }
.num { width: 51px; text-align: right; }
```
